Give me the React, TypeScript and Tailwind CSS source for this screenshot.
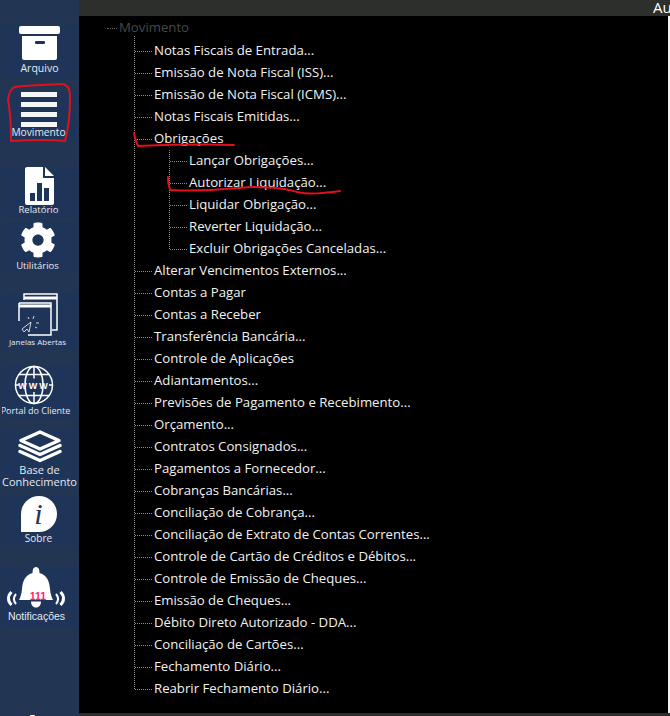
import { FaCog } from 'react-icons/fa';

const iconFill = '#ffffff';

const ArquivoIcon = () => (
  <svg width="42" height="35" viewBox="0 0 42 35">
    <rect x="0" y="0" width="41" height="8" rx="2" fill={iconFill} />
    <path d="M3 10h35v22a2 2 0 0 1-2 2H5a2 2 0 0 1-2-2z" fill={iconFill} />
    <rect x="16" y="15" width="10" height="3" rx="1" fill="#1f3459" />
  </svg>
);

const MovimentoIcon = () => (
  <div className="flex flex-col gap-[5px] w-[36px] mr-[2px]">
    <div className="h-[5px] bg-[#f4f5f7]" />
    <div className="h-[5px] bg-[#f4f5f7]" />
    <div className="h-[5px] bg-[#f4f5f7]" />
    <div className="h-[5px] bg-[#f4f5f7]" />
  </div>
);

const RelatorioIcon = () => (
  <svg width="30" height="38" viewBox="0 0 30 38">
    <path d="M2 0h16v11h11v25a2 2 0 0 1-2 2H2a2 2 0 0 1-2-2V2a2 2 0 0 1 2-2z" fill={iconFill} />
    <path d="M20 0l9 9h-9z" fill={iconFill} />
    <rect x="5" y="26" width="5" height="8" fill="#1f3459" />
    <rect x="12" y="16" width="5" height="18" fill="#1f3459" />
    <rect x="19" y="21" width="5" height="13" fill="#1f3459" />
  </svg>
);

const JanelasIcon = () => (
  <svg width="40" height="43" viewBox="0 0 40 43" fill="none" stroke="#fff">
    <path d="M6 7V1h33v36h-5" strokeWidth="1.5" />
    <path d="M6 5h33" strokeWidth="3" />
    <path d="M1 10h32v32H10M1 28V10" strokeWidth="1.5" />
    <path d="M1 13h32" strokeWidth="3" />
    <path d="M4 36l9-7-2 10-2-3-3 3z" strokeWidth="0.8" />
    <path d="M15 26l1-3M10 24l1 2M18 30h3M17 34l2 1" strokeWidth="0.8" />
  </svg>
);

const PortalIcon = () => (
  <svg width="40" height="40" viewBox="0 0 40 40" fill="none" stroke="#fff" strokeWidth="1.5" className="mr-[12px] shrink-0">
    <circle cx="20" cy="20" r="18.5" />
    <ellipse cx="20" cy="20" rx="9" ry="18.5" />
    <path d="M20 1.5v12M20 27v11.5M5 9.5h30M5 30.5h30M2 20h3M35 20h3" />
    <text x="20" y="23.5" textAnchor="middle" fontSize="9" fontWeight="700" fill="#fff" stroke="none" letterSpacing="2" fontFamily="'Liberation Sans', sans-serif">
      WWW
    </text>
  </svg>
);

const BaseIcon = () => (
  <svg width="46" height="33" viewBox="0 0 46 33" fill="none" stroke="#fff" className="shrink-0">
    <path d="M23 2L42 10.5 23 19 4 10.5z" strokeWidth="3.5" strokeLinejoin="round" />
    <path d="M3 15.5l20 9 20-9" strokeWidth="3.5" strokeLinecap="round" strokeLinejoin="round" />
    <path d="M3 21.5l20 9 20-9" strokeWidth="3.5" strokeLinecap="round" strokeLinejoin="round" />
  </svg>
);

const SobreIcon = () => (
  <div className="w-[36px] h-[36px] mr-[2px] bg-white rounded-t-full rounded-br-full flex items-center justify-center">
    <span className="text-[#1f3459] text-[30px] leading-none italic font-['Liberation_Serif',serif]">i</span>
  </div>
);

const NotificacoesIcon = () => (
  <svg width="60" height="42" viewBox="0 0 60 42">
    <path d="M29 0c2.500 0 3.500 2 3.500 6 8 2.500 10 9 10.500 16 .5 5 1.500 8 3 11H12c1.500-3 2.500-6 3-11 .5-7 2.500-13.500 10.500-16 0-4 1-6 3.500-6z" fill="#fff" />
    <path d="M24 34.500h10c0 4-2.500 6-5 6s-5-2-5-6z" fill="#fff" />
    <path d="M4.500 25c-4 4-4 9 0 13" stroke="#fff" strokeWidth="3" fill="none" />
    <path d="M9 27c-2.500 3-2.500 7 0 10" stroke="#fff" strokeWidth="2" fill="none" />
    <path d="M53.500 25c4 4 4 9 0 13" stroke="#fff" strokeWidth="3" fill="none" />
    <path d="M49 27c2.500 3 2.500 7 0 10" stroke="#fff" strokeWidth="2" fill="none" />
    <text x="31" y="33" textAnchor="middle" fontSize="10.500" fontWeight="700" fill="#ff1a6b" fontFamily="'Liberation Sans', sans-serif">
      111
    </text>
  </svg>
);

const SideItem = ({ label, className, labelClass, children }: { label: string; className: string; labelClass: string; children: React.ReactNode }) => (
  <div className={`mx-[2px] bg-[#1f3459] overflow-hidden flex flex-col items-center shrink-0 ${className}`}>
    {children}
    <span className={`text-center text-[#e6e9ef] ${labelClass}`}>{label}</span>
  </div>
);

const firstRows = [
  'Notas Fiscais de Entrada...',
  'Emissão de Nota Fiscal (ISS)...',
  'Emissão de Nota Fiscal (ICMS)...',
  'Notas Fiscais Emitidas...',
];

const subRows = [
  'Lançar Obrigações...',
  'Autorizar Liquidação...',
  'Liquidar Obrigação...',
  'Reverter Liquidação...',
  'Excluir Obrigações Canceladas...',
];

const lastRows = [
  'Alterar Vencimentos Externos...',
  'Contas a Pagar',
  'Contas a Receber',
  'Transferência Bancária...',
  'Controle de Aplicações',
  'Adiantamentos...',
  'Previsões de Pagamento e Recebimento...',
  'Orçamento...',
  'Contratos Consignados...',
  'Pagamentos a Fornecedor...',
  'Cobranças Bancárias...',
  'Conciliação de Cobrança...',
  'Conciliação de Extrato de Contas Correntes...',
  'Controle de Cartão de Créditos e Débitos...',
  'Controle de Emissão de Cheques...',
  'Emissão de Cheques...',
  'Débito Direto Autorizado - DDA...',
  'Conciliação de Cartões...',
  'Fechamento Diário...',
  'Reabrir Fechamento Diário...',
];

const TreeRow = ({ text }: { text: string }) => (
  <div className="h-[22px] flex items-center">
    <div className="w-[17px] border-t border-dotted border-[#8a8a8a]" />
    <span className="ml-[2px] text-[13.2px] text-[#f2f2f2] whitespace-nowrap">{text}</span>
  </div>
);

export default function App() {
  return (
    <div className="w-[670px] h-[716px] flex bg-black overflow-hidden relative font-['Open_Sans',sans-serif]">
      {/* Sidebar */}
      <div className="w-[79px] h-full bg-[#223553] flex flex-col shrink-0 text-[11px]">
        <SideItem label="Arquivo" className="mt-[26px] h-[52px]" labelClass="text-[10.5px] leading-[14px] whitespace-nowrap">
          <ArquivoIcon />
        </SideItem>
        <SideItem label="Movimento" className="mt-[14px] h-[50px]" labelClass="text-[10.2px] leading-[14px] mt-[-2px] mr-[2px] whitespace-nowrap">
          <MovimentoIcon />
        </SideItem>
        <SideItem label="Relatório" className="mt-[25px] h-[51px]" labelClass="text-[9.5px] leading-[13px] mt-[-2px] mr-[2px] whitespace-nowrap">
          <RelatorioIcon />
        </SideItem>
        <SideItem label="Utilitários" className="mt-[4px] h-[50px] pr-[4px]" labelClass="text-[9.5px] leading-[13px] mt-[1px] whitespace-nowrap">
          <FaCog size={36} color="#fff" />
        </SideItem>
        <SideItem label="Janelas Abertas" className="mt-[21px] h-[57px] pr-[4px]" labelClass="text-[8px] leading-[11px] whitespace-nowrap">
          <JanelasIcon />
        </SideItem>
        <SideItem label="Portal do Cliente" className="mt-[15px] h-[54px]" labelClass="text-[9px] leading-[12px] mr-[8px] whitespace-nowrap">
          <PortalIcon />
        </SideItem>
        <SideItem label="Base de Conhecimento" className="mt-[11px] h-[56px]" labelClass="text-[11px] leading-[12px] mt-[1px]">
          <BaseIcon />
        </SideItem>
        <SideItem label="Sobre" className="mt-[10px] h-[50px]" labelClass="text-[10px] leading-[13px] mr-[2px] whitespace-nowrap">
          <SobreIcon />
        </SideItem>
        <SideItem label="Notificações" className="mt-[21px] h-[60px] pr-[6px]" labelClass="text-[10.5px] leading-[13px] mt-[1px] font-['Liberation_Sans',sans-serif] whitespace-nowrap">
          <NotificacoesIcon />
        </SideItem>
        <div className="mt-[88px] ml-[30px] w-[5px] h-[4px] bg-white rounded-t-full" />
      </div>

      {/* Main */}
      <div className="flex-1 flex flex-col min-w-0">
        <div className="h-[16px] bg-[#2d2f2d] shrink-0 overflow-hidden flex justify-end">
          <span className="text-[15px] leading-[14px] text-white w-[17px] whitespace-nowrap overflow-hidden">Au</span>
        </div>
        <div className="flex-1 min-h-0 flex">
          <div className="flex-1 min-w-0 pl-[28px] pt-[1px]">
            <div className="h-[22px] flex items-center">
              <div className="w-[10px] border-t border-dotted border-[#666]" />
              <span className="ml-[2px] text-[13.2px] text-[#454a48]">Movimento</span>
            </div>
            {/* Top level branch */}
            <div className="ml-[27px] h-[653px] mt-[-3px] pt-[4px] border-l border-dotted border-[#8a8a8a]">
              {firstRows.map(t => <TreeRow key={t} text={t} />)}
              <TreeRow text="Obrigações" />
              <div className="ml-[34px] h-[99px] mb-[11px] border-l border-dotted border-[#8a8a8a]">
                {subRows.map(t => <TreeRow key={t} text={t} />)}
              </div>
              {lastRows.map(t => <TreeRow key={t} text={t} />)}
            </div>
          </div>
          <div className="w-[2px] bg-[#f4f1f3] shrink-0" />
        </div>
        <div className="h-[3px] bg-[#2d2f2d] shrink-0" />
      </div>

      {/* Red pen marks over the screenshot */}
      <svg className="absolute inset-0 pointer-events-none" width="670" height="716" fill="none" stroke="#e0101c" strokeWidth="2" strokeLinecap="round" strokeLinejoin="round">
        <path d="M8 100C9 92 11 88 15 87 28 85 45 85 62 84 68 85 70 88 70 98 70 115 68 130 65 141 48 139 28 140 11 141 11 125 10 110 8 100Z" />
        <path d="M134 133C135 138 136 142 138 146 165 145 205 144 234 145" />
        <path d="M168 177C168 184 169 188 171 190 200 192 225 189 250 187 270 187 285 188 297 192 310 195 325 193 340 191" />
      </svg>
    </div>
  );
}
